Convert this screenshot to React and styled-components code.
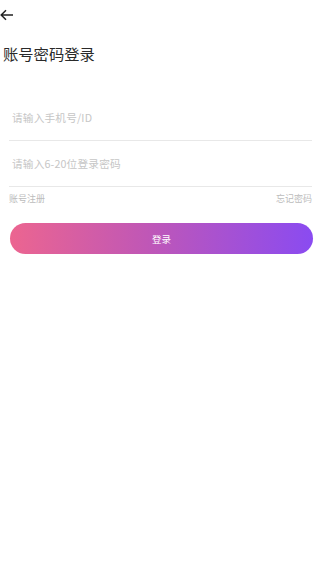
import React from 'react';
import styled, { createGlobalStyle } from 'styled-components';

const GlobalStyle = createGlobalStyle`
  html, body {
    margin: 0;
    padding: 0;
    background: #fff;
    font-family: 'Noto Sans CJK SC', 'Noto Sans', sans-serif;
  }
`;

const Page = styled.div`
  width: 320px;
  min-height: 581px;
  background: #fff;
`;

const Header = styled.div`
  height: 30px;
  display: flex;
  align-items: center;
`;

const BackButton = styled.button`
  border: none;
  background: none;
  padding: 0;
  display: flex;
  align-items: center;
  cursor: pointer;
`;

const Title = styled.h1`
  margin: 11px 0 0 3px;
  font-size: 15.3px;
  font-weight: 400;
  color: #2a2a2a;
  line-height: 24px;
`;

const Form = styled.div`
  margin-top: 30px;
  padding: 0 8px 0 9px;
`;

const Field = styled.div`
  height: 45px;
  border-bottom: 1px solid #e8e8e8;
  display: flex;
  align-items: center;
`;

const Input = styled.input`
  border: none;
  outline: none;
  width: 100%;
  padding: 0 0 0 3px;
  font-family: inherit;
  font-size: 10.7px;
  letter-spacing: 0.15px;
  color: #333;
  background: transparent;
  &::placeholder {
    color: #c6c6c6;
  }
`;

const Links = styled.div`
  display: flex;
  justify-content: space-between;
  margin-top: 5px;
`;

const LinkText = styled.span`
  font-size: 9px;
  color: #bcbcbc;
  line-height: 14px;
`;

const SubmitButton = styled.button`
  display: block;
  width: 303px;
  height: 31px;
  margin: 17px 0 0 1px;
  border: none;
  border-radius: 16px;
  background: linear-gradient(90deg, #ec6590 0%, #c057b6 45%, #8a4bf1 100%);
  color: #fff;
  font-family: inherit;
  font-size: 9.5px;
  cursor: pointer;
`;

export default function App() {
  return (
    <Page>
      <GlobalStyle />
      <Header>
        <BackButton aria-label="返回">
          <svg width="14" height="12" viewBox="0 0 14 12" fill="none">
            <path d="M13 6H1.5M6 1.2L1.2 6L6 10.8" stroke="#222" strokeWidth="1.5" />
          </svg>
        </BackButton>
      </Header>
      <Title>账号密码登录</Title>
      <Form>
        <Field>
          <Input placeholder="请输入手机号/ID" />
        </Field>
        <Field>
          <Input type="password" placeholder="请输入6-20位登录密码" />
        </Field>
        <Links>
          <LinkText>账号注册</LinkText>
          <LinkText>忘记密码</LinkText>
        </Links>
        <SubmitButton>登录</SubmitButton>
      </Form>
    </Page>
  );
}
